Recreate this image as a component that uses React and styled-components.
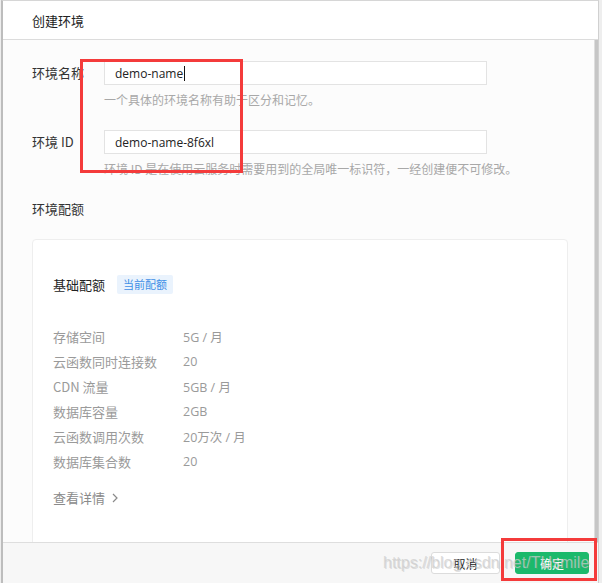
import React from "react";
import styled, { createGlobalStyle } from "styled-components";

const Global = createGlobalStyle`
  html, body { margin: 0; padding: 0; }
  body { background: #ececec; font-family: "Noto Sans CJK SC", "Noto Sans", sans-serif; }
  * { box-sizing: border-box; }
`;

const Screen = styled.div`
  position: relative;
  width: 602px;
  height: 583px;
  overflow: hidden;
  display: flex;
  padding-left: 1px;
  background: #eeeeee;
`;

const Dialog = styled.div`
  width: 598px;
  height: 583px;
  display: flex;
  flex-direction: column;
  background: #ffffff;
  border-left: 2px solid #bdbdbd;
  border-top: 1px solid #d6d6d6;
  border-right: 1px solid #d0d0d0;
`;

const Header = styled.div`
  height: 39px;
  flex: none;
  display: flex;
  align-items: center;
  padding-left: 29px;
  font-size: 13px;
  color: #222;
  background: #ffffff;
  border-bottom: 1px solid #dcdcdc;
`;

const Body = styled.div`
  flex: 1;
  min-height: 0;
  display: flex;
`;

const Content = styled.div`
  flex: 1;
  overflow: hidden;
  padding: 21px 0 0 29px;
  background: #fcfcfc;
`;

const ScrollTrack = styled.div`
  width: 4px;
  flex: none;
  background: #c6c6c6;
  border-left: 1px solid #dedede;
`;

const Field = styled.div`
  margin-bottom: 21px;
`;

const FieldRow = styled.div`
  display: flex;
  align-items: center;
`;

const Label = styled.div`
  width: 72px;
  font-size: 13px;
  color: #333;
  line-height: 20px;
`;

const Input = styled.div`
  width: 383px;
  height: 24px;
  display: flex;
  align-items: center;
  padding-left: 10px;
  background: #fff;
  border: 1px solid #e3e3e3;
  font-family: "Open Sans", "Noto Sans CJK SC", sans-serif;
  font-size: 12px;
  color: #222;
`;

const Caret = styled.span`
  display: inline-block;
  width: 1px;
  height: 15px;
  background: #111;
  margin-left: 1px;
`;

const Help = styled.div`
  margin: 6px 0 0 72px;
  font-size: 12px;
  line-height: 18px;
  color: #a8a8a8;
`;

const SectionTitle = styled.div`
  font-size: 13px;
  line-height: 20px;
  color: #333;
`;

const Card = styled.div`
  width: 536px;
  margin-top: 20px;
  padding: 34px 0 60px 20px;
  background: #ffffff;
  border: 1px solid #eeeeee;
  border-radius: 4px;
`;

const PlanHead = styled.div`
  display: flex;
  align-items: center;
  gap: 12px;
  height: 20px;
`;

const PlanName = styled.div`
  font-size: 13px;
  color: #222;
`;

const Tag = styled.span`
  height: 19px;
  display: inline-flex;
  align-items: center;
  padding: 0 6px;
  border-radius: 2px;
  background: #eaf3fd;
  color: #3f8fe6;
  font-size: 11px;
`;

const QuotaList = styled.div`
  margin-top: 30px;
`;

const QuotaRow = styled.div`
  display: flex;
  height: 25px;
  align-items: center;
  font-size: 13px;
  color: #9a9a9a;
`;

const QuotaKey = styled.div`
  width: 130px;
`;

const QuotaVal = styled.div`
  font-family: "Open Sans", "Noto Sans CJK SC", sans-serif;
  font-size: 12.5px;
`;

const More = styled.div`
  margin-top: 14px;
  line-height: 20px;
  font-size: 13px;
  color: #8a8a8a;
  display: flex;
  align-items: center;
  gap: 6px;
`;

const Footer = styled.div`
  height: 41px;
  flex: none;
  display: flex;
  justify-content: flex-end;
  gap: 15px;
  padding: 9px 9px 0 0;
  background: #f7f7f7;
  border-top: 1px solid #dedede;
`;

const Button = styled.button`
  width: ${(p) => (p.$primary ? 74 : 69)}px;
  height: 22px;
  padding: 0;
  font-family: "Noto Sans CJK SC", sans-serif;
  font-size: 12px;
  border-radius: 3px;
  border: 1px solid ${(p) => (p.$primary ? "#1bb96b" : "#dcdcdc")};
  background: ${(p) => (p.$primary ? "#1bb96b" : "#ffffff")};
  color: ${(p) => (p.$primary ? "#ffffff" : "#222")};
`;

const Watermark = styled.div`
  position: absolute;
  left: 383px;
  top: 553px;
  font-family: "Liberation Sans", Arial, sans-serif;
  font-size: 16px;
  line-height: 20px;
  color: rgba(205, 205, 205, 0.72);
  text-shadow: 1px 1px 0 rgba(140, 140, 140, 0.25);
  pointer-events: none;
  white-space: nowrap;
`;

const Mark = styled.div`
  position: absolute;
  border: 3px solid #f43b3b;
  pointer-events: none;
`;

const quotas = [
  ["存储空间", "5G / 月"],
  ["云函数同时连接数", "20"],
  ["CDN 流量", "5GB / 月"],
  ["数据库容量", "2GB"],
  ["云函数调用次数", "20万次 / 月"],
  ["数据库集合数", "20"],
];

export default function App() {
  return (
    <>
      <Global />
      <Screen>
        <Dialog>
          <Header>创建环境</Header>
          <Body>
            <Content>
              <Field>
                <FieldRow>
                  <Label>环境名称</Label>
                  <Input>
                    demo-name
                    <Caret />
                  </Input>
                </FieldRow>
                <Help>一个具体的环境名称有助于区分和记忆。</Help>
              </Field>
              <Field>
                <FieldRow>
                  <Label>环境 ID</Label>
                  <Input>demo-name-8f6xl</Input>
                </FieldRow>
                <Help>环境 ID 是在使用云服务时需要用到的全局唯一标识符，一经创建便不可修改。</Help>
              </Field>
              <SectionTitle>环境配额</SectionTitle>
              <Card>
                <PlanHead>
                  <PlanName>基础配额</PlanName>
                  <Tag>当前配额</Tag>
                </PlanHead>
                <QuotaList>
                  {quotas.map(([k, v]) => (
                    <QuotaRow key={k}>
                      <QuotaKey>{k}</QuotaKey>
                      <QuotaVal>{v}</QuotaVal>
                    </QuotaRow>
                  ))}
                </QuotaList>
                <More>
                  查看详情
                  <svg width="8" height="10" viewBox="0 0 8 10">
                    <path d="M2 1 L6 5 L2 9" fill="none" stroke="#8a8a8a" strokeWidth="1.2" />
                  </svg>
                </More>
              </Card>
            </Content>
            <ScrollTrack />
          </Body>
          <Footer>
            <Button>取消</Button>
            <Button $primary>确定</Button>
          </Footer>
        </Dialog>
        <Watermark>https://blog.csdn.net/TUsmile</Watermark>
        <Mark style={{ left: 80, top: 59, width: 163, height: 114 }} />
        <Mark style={{ left: 501, top: 538, width: 96, height: 43 }} />
      </Screen>
    </>
  );
}
